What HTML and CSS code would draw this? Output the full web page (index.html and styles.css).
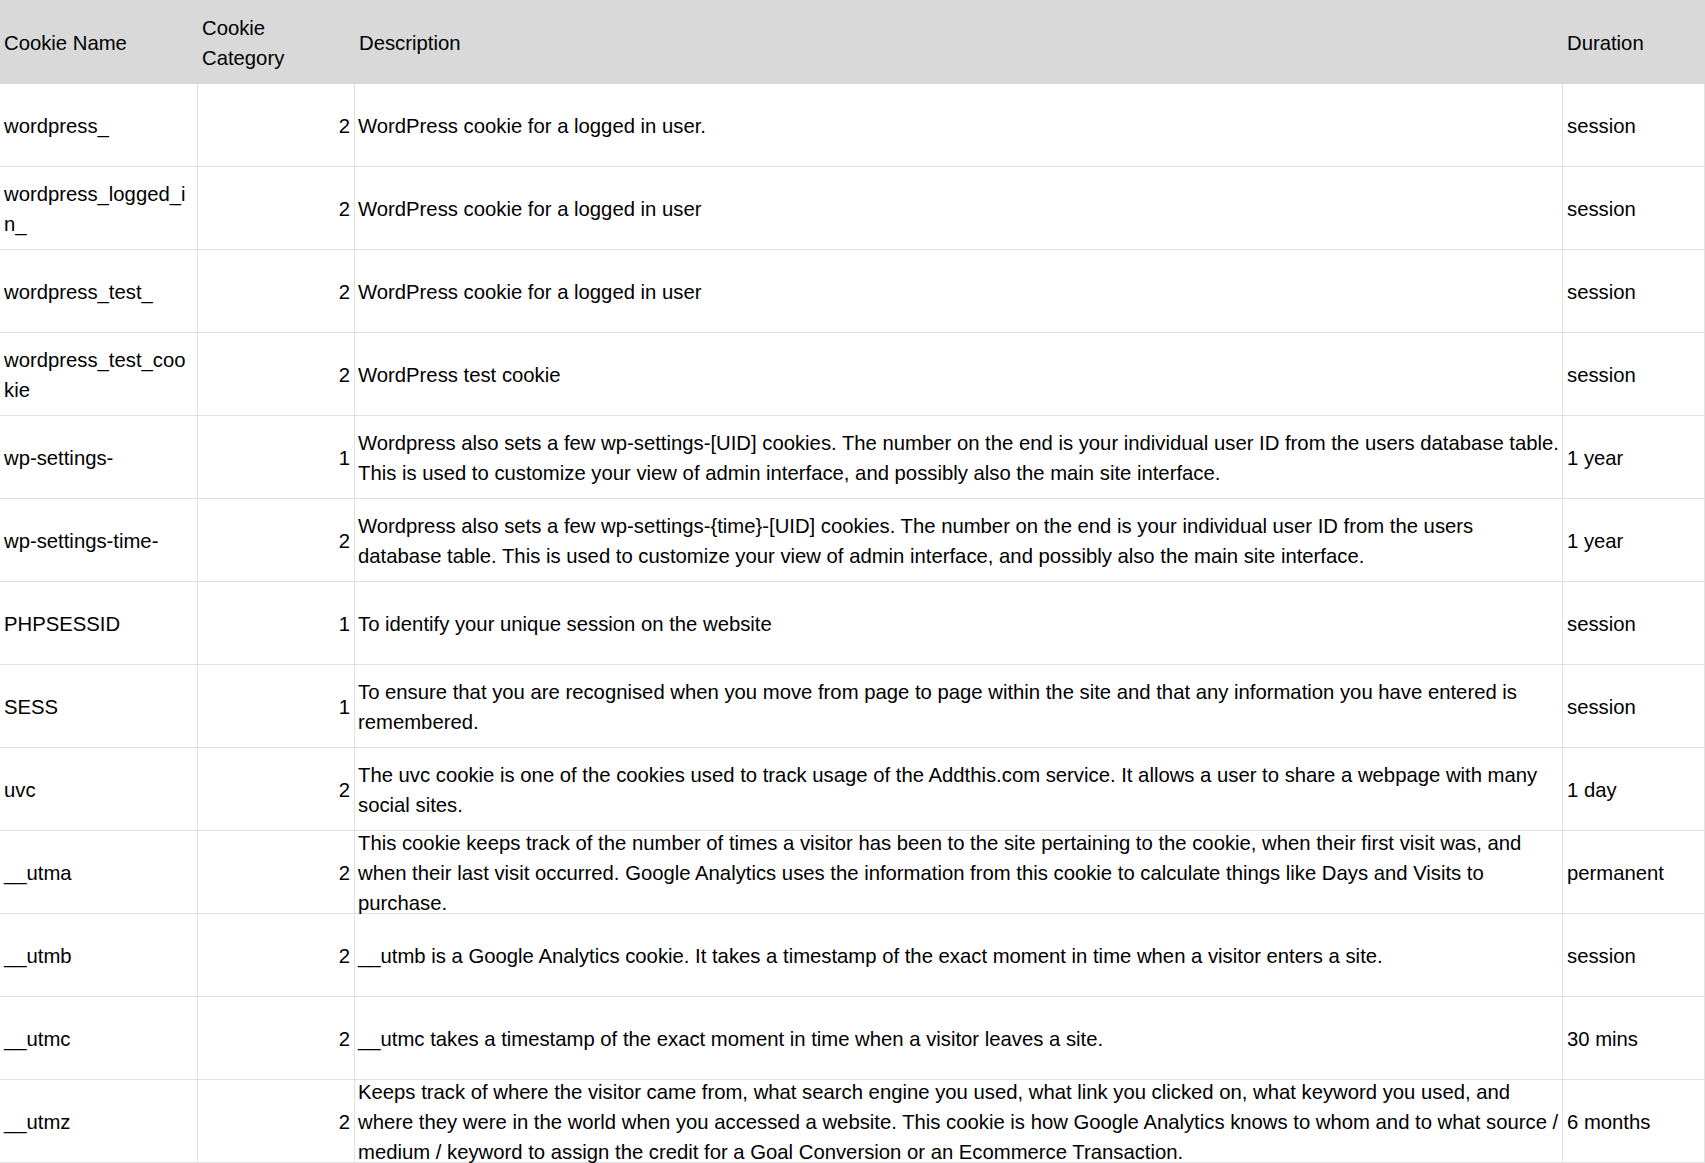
FILE: index.html
```html
<!DOCTYPE html>
<html lang="en">
<head>
  <meta charset="UTF-8">
  <title>Cookies</title>
  <link rel="stylesheet" href="styles.css">
</head>
<body>
  <div class="sheet">
    <div class="cell head">Cookie Name</div>
    <div class="cell head">Cookie<br>Category</div>
    <div class="cell head">Description</div>
    <div class="cell head">Duration</div>

    <div class="cell">wordpress_</div>
    <div class="cell num">2</div>
    <div class="cell desc">WordPress cookie for a logged in user.</div>
    <div class="cell">session</div>

    <div class="cell">wordpress_logged_i<br>n_</div>
    <div class="cell num">2</div>
    <div class="cell desc">WordPress cookie for a logged in user</div>
    <div class="cell">session</div>

    <div class="cell">wordpress_test_</div>
    <div class="cell num">2</div>
    <div class="cell desc">WordPress cookie for a logged in user</div>
    <div class="cell">session</div>

    <div class="cell">wordpress_test_coo<br>kie</div>
    <div class="cell num">2</div>
    <div class="cell desc">WordPress test cookie</div>
    <div class="cell">session</div>

    <div class="cell">wp-settings-</div>
    <div class="cell num">1</div>
    <div class="cell desc">Wordpress also sets a few wp-settings-[UID] cookies. The number on the end is your individual user ID from the users database table.<br>This is used to customize your view of admin interface, and possibly also the main site interface.</div>
    <div class="cell">1 year</div>

    <div class="cell">wp-settings-time-</div>
    <div class="cell num">2</div>
    <div class="cell desc">Wordpress also sets a few wp-settings-{time}-[UID] cookies. The number on the end is your individual user ID from the users<br>database table. This is used to customize your view of admin interface, and possibly also the main site interface.</div>
    <div class="cell">1 year</div>

    <div class="cell">PHPSESSID</div>
    <div class="cell num">1</div>
    <div class="cell desc">To identify your unique session on the website</div>
    <div class="cell">session</div>

    <div class="cell">SESS</div>
    <div class="cell num">1</div>
    <div class="cell desc">To ensure that you are recognised when you move from page to page within the site and that any information you have entered is<br>remembered.</div>
    <div class="cell">session</div>

    <div class="cell">uvc</div>
    <div class="cell num">2</div>
    <div class="cell desc">The uvc cookie is one of the cookies used to track usage of the Addthis.com service. It allows a user to share a webpage with many<br>social sites.</div>
    <div class="cell">1 day</div>

    <div class="cell">__utma</div>
    <div class="cell num">2</div>
    <div class="cell desc">This cookie keeps track of the number of times a visitor has been to the site pertaining to the cookie, when their first visit was, and<br>when their last visit occurred. Google Analytics uses the information from this cookie to calculate things like Days and Visits to<br>purchase.</div>
    <div class="cell">permanent</div>

    <div class="cell">__utmb</div>
    <div class="cell num">2</div>
    <div class="cell desc">__utmb is a Google Analytics cookie. It takes a timestamp of the exact moment in time when a visitor enters a site.</div>
    <div class="cell">session</div>

    <div class="cell">__utmc</div>
    <div class="cell num">2</div>
    <div class="cell desc">__utmc takes a timestamp of the exact moment in time when a visitor leaves a site.</div>
    <div class="cell">30 mins</div>

    <div class="cell">__utmz</div>
    <div class="cell num">2</div>
    <div class="cell desc">Keeps track of where the visitor came from, what search engine you used, what link you clicked on, what keyword you used, and<br>where they were in the world when you accessed a website. This cookie is how Google Analytics knows to whom and to what source /<br>medium / keyword to assign the credit for a Goal Conversion or an Ecommerce Transaction.</div>
    <div class="cell">6 months</div>
  </div>
</body>
</html>
```

FILE: styles.css
```css
*{box-sizing:border-box;margin:0;padding:0}
body{background:#fff;font-family:"Liberation Sans",Arial,sans-serif;font-size:20.3px;color:#000;overflow:hidden}
.sheet{display:grid;grid-template-columns:198px 157px 1208px 142px;grid-template-rows:84px;grid-auto-rows:83px;width:1705px}
.cell{display:flex;align-items:center;padding:2px 4px 0;line-height:30px;border-right:1px solid #e1e1e1;border-bottom:1px solid #e1e1e1;white-space:nowrap}
.head{background:#d9d9d9;border:none}
.num{justify-content:flex-end}
.desc{padding-left:3px}
```
